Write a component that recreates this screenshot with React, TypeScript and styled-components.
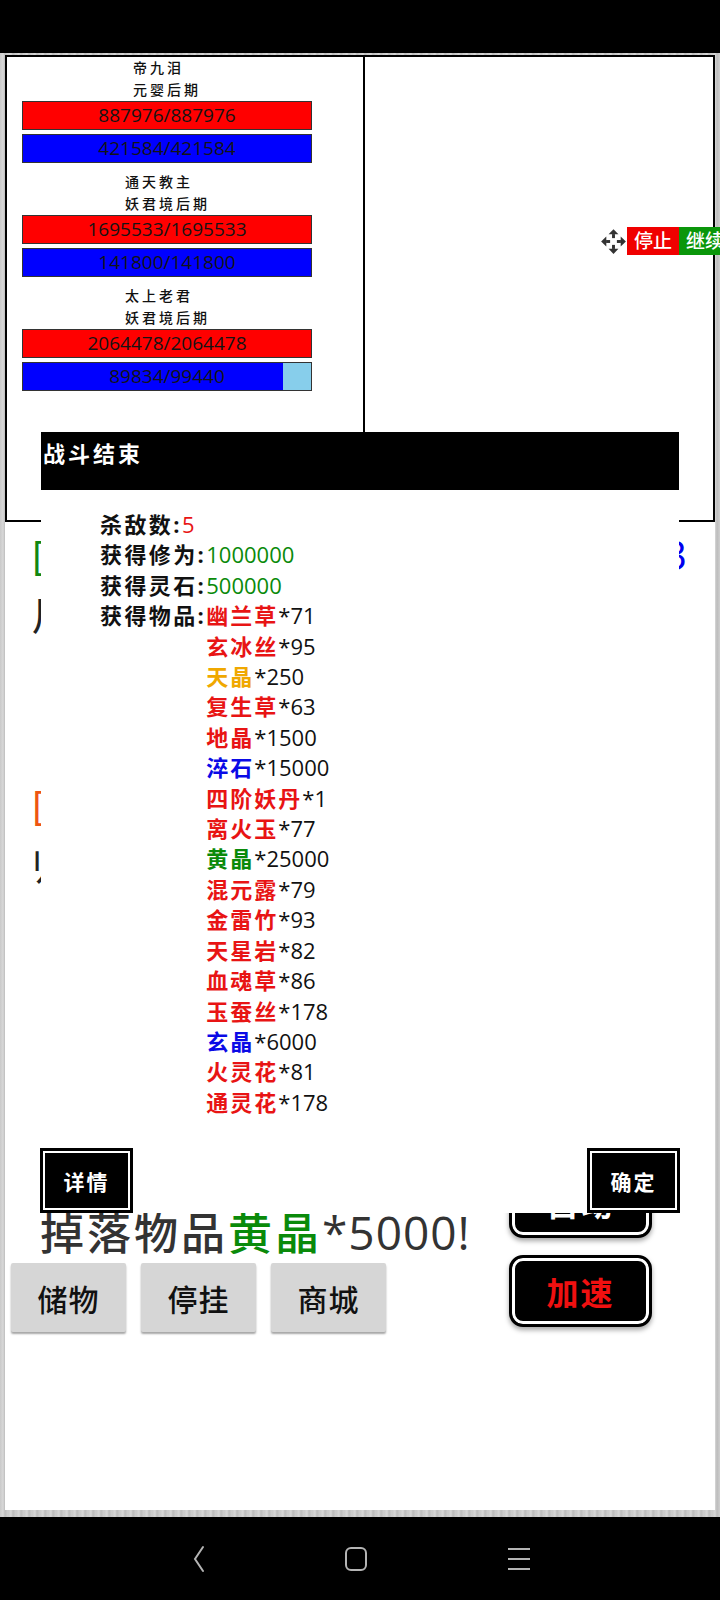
import React from 'react';
import styled, { createGlobalStyle } from 'styled-components';

const FONT = `"Open Sans", "Noto Sans CJK SC", sans-serif`;

const Global = createGlobalStyle`
    html, body {
        margin: 0;
        padding: 0;
        overflow: hidden;
        background: #000;
    }
    * {
        box-sizing: border-box;
    }
`;

const Root = styled.div`
    width: 720px;
    height: 1600px;
    display: flex;
    flex-direction: column;
    background: #000;
    font-family: ${FONT};
    color: #111;
`;

const StatusBar = styled.div`
    height: 53px;
    background: #000;
`;

const Stage = styled.div`
    flex: 1;
    padding: 2px 5px 7px 5px;
    background: repeating-linear-gradient(90deg, #c9c9c9 0px, #d8d8d8 3px, #bcbcbc 5px, #cfcfcf 8px);
`;

const Page = styled.div`
    position: relative;
    height: 100%;
    background: #fff;
    display: flex;
    flex-direction: column;
`;

/* battle frame */

const Frame = styled.div`
    display: grid;
    grid-template-columns: 358px 1fr;
    height: 467px;
    border: 2px solid #000;
`;

const LeftPane = styled.div`
    display: flex;
    flex-direction: column;
    gap: 8px;
    border-right: 2px solid #000;
`;

const Unit = styled.div`
    display: flex;
    flex-direction: column;
`;

const NameLine = styled.div<{ $indent: number }>`
    padding-left: ${p => p.$indent}px;
    font-size: 14px;
    line-height: 22px;
    letter-spacing: 3px;
    font-weight: 500;
    color: #111;
`;

const Bar = styled.div<{ $gap?: number }>`
    width: 290px;
    height: 29px;
    margin: ${p => p.$gap || 0}px 0 0 15px;
    border: 1px solid #333;
    font-size: 19px;
    line-height: 27px;
    text-align: center;
    color: #141414;
`;

const RightPane = styled.div`
    padding: 170px 0 0 235px;
`;

const Controls = styled.div`
    display: flex;
    align-items: center;
    white-space: nowrap;
`;

const ControlButton = styled.div<{ $bg: string }>`
    height: 28px;
    padding: 0 7px;
    background: ${p => p.$bg};
    color: #fff;
    font-size: 19px;
    line-height: 28px;
    font-weight: 500;
`;

/* log behind the dialog */

const Log = styled.div`
    padding: 0 28px 0 27px;
    font-size: 40px;
    line-height: 60px;
    white-space: nowrap;
`;

const Entry = styled.div<{ $top: number }>`
    margin-top: ${p => p.$top}px;
`;

const LogLine = styled.div`
    display: flex;
    justify-content: space-between;
    color: #222;
`;

const Tag = styled.span<{ $color: string }>`
    color: ${p => p.$color};
`;

/* footer */

const Footer = styled.div`
    margin-top: 271px;
    display: flex;
    justify-content: space-between;
    align-items: flex-end;
    padding-right: 63px;
`;

const FooterLeft = styled.div`
    display: flex;
    flex-direction: column;
`;

const Message = styled.div`
    padding-left: 35px;
    font-size: 44px;
    line-height: 60px;
    letter-spacing: 3px;
    font-weight: 500;
    color: #333;
    white-space: nowrap;
`;

const Digits = styled.span`
    font-size: 46px;
    letter-spacing: 1px;
    font-weight: 400;
`;

const GreyRow = styled.div`
    display: flex;
    gap: 15px;
    padding-left: 6px;
`;

const GreyButton = styled.div`
    width: 115px;
    height: 69px;
    display: flex;
    align-items: center;
    justify-content: center;
    background: #d6d6d6;
    border-radius: 2px;
    box-shadow: 0 2px 2px rgba(0, 0, 0, 0.35);
    font-size: 30px;
    letter-spacing: 1px;
    font-weight: 500;
    color: #111;
`;

const FooterRight = styled.div`
    display: flex;
    flex-direction: column;
    gap: 17px;
    padding-bottom: 5px;
`;

const BigButton = styled.div<{ $color: string }>`
    width: 143px;
    height: 72px;
    display: flex;
    align-items: center;
    justify-content: center;
    background: #000;
    border: 3px solid #000;
    border-radius: 14px;
    box-shadow: inset 0 0 0 3px #fff, 0 3px 5px rgba(0, 0, 0, 0.35);
    color: ${p => p.$color};
    font-size: 32px;
    letter-spacing: 2px;
    font-weight: 700;
`;

/* dialog */

const Dialog = styled.div`
    position: absolute;
    left: 36px;
    top: 377px;
    width: 638px;
    height: 781px;
    display: flex;
    flex-direction: column;
    background: #fff;
`;

const DialogHeader = styled.div`
    height: 58px;
    padding: 6px 2px 0;
    background: #000;
    color: #fff;
    font-size: 22px;
    line-height: 30px;
    letter-spacing: 3px;
    font-weight: 700;
`;

const DialogBody = styled.div`
    flex: 1;
    padding: 19px 0 0 59px;
    font-size: 22px;
    line-height: 30.4px;
    color: #111;
`;

const StatRow = styled.div`
    display: flex;
`;

const Label = styled.span`
    letter-spacing: 2.4px;
    font-weight: 700;
`;

const ItemList = styled.div`
    display: flex;
    flex-direction: column;
`;

const Colored = styled.span<{ $color: string; $cjk?: boolean }>`
    color: ${p => p.$color};
    letter-spacing: ${p => (p.$cjk ? '2px' : '0')};
    font-weight: ${p => (p.$cjk ? 700 : 400)};
`;

const DialogButtons = styled.div`
    display: flex;
    justify-content: space-between;
    margin: 0 -1px;
`;

const BoxButton = styled.div`
    width: 93px;
    height: 65px;
    display: flex;
    align-items: center;
    justify-content: center;
    background: #000;
    border: 3px solid #000;
    box-shadow: inset 0 0 0 2px #fff;
    color: #fff;
    font-size: 21px;
    letter-spacing: 2px;
    font-weight: 700;
`;

/* nav bar */

const NavBar = styled.div`
    height: 83px;
    background: #000;
    display: flex;
    align-items: center;
    justify-content: center;
    gap: 137px;
    padding-left: 4px;
`;

const RED = '#e81414';
const BLUE = '#0a0ae6';
const GREEN = '#0a8a0a';
const GOLD = '#f0a800';

const units = [
    { name: '帝九泪', realm: '元婴后期', indent: 126, hp: [887976, 887976], mp: [421584, 421584] },
    { name: '通天教主', realm: '妖君境后期', indent: 118, hp: [1695533, 1695533], mp: [141800, 141800] },
    { name: '太上老君', realm: '妖君境后期', indent: 118, hp: [2064478, 2064478], mp: [89834, 99440] },
];

const items: [string, string, number][] = [
    ['幽兰草', RED, 71],
    ['玄冰丝', RED, 95],
    ['天晶', GOLD, 250],
    ['复生草', RED, 63],
    ['地晶', RED, 1500],
    ['淬石', BLUE, 15000],
    ['四阶妖丹', RED, 1],
    ['离火玉', RED, 77],
    ['黄晶', GREEN, 25000],
    ['混元露', RED, 79],
    ['金雷竹', RED, 93],
    ['天星岩', RED, 82],
    ['血魂草', RED, 86],
    ['玉蚕丝', RED, 178],
    ['玄晶', BLUE, 6000],
    ['火灵花', RED, 81],
    ['通灵花', RED, 178],
];

const fillBg = (cur: number, max: number, color: string, empty: string) => {
    const pct = (cur / max) * 100;
    return `linear-gradient(to right, ${color} ${pct}%, ${empty} ${pct}%)`;
};

const MoveIcon = () => (
    <svg width="27" height="27" viewBox="0 0 24 24" fill="#333">
        <polygon points="12,1 7.6,5.6 16.4,5.6" />
        <rect x="10.7" y="5.4" width="2.6" height="3.6" />
        <polygon points="12,23 7.6,18.4 16.4,18.4" />
        <rect x="10.7" y="15" width="2.6" height="3.6" />
        <polygon points="1,12 5.6,7.6 5.6,16.4" />
        <rect x="5.4" y="10.7" width="3.6" height="2.6" />
        <polygon points="23,12 18.4,7.6 18.4,16.4" />
        <rect x="15" y="10.7" width="3.6" height="2.6" />
    </svg>
);

const BackIcon = () => (
    <svg width="14" height="28" viewBox="0 0 14 28" fill="none" stroke="#b4b4b4" strokeWidth="2" strokeLinecap="round">
        <polyline points="11,2 3,14 11,26" />
    </svg>
);

const HomeIcon = () => (
    <svg width="26" height="26" viewBox="0 0 26 26" fill="none" stroke="#b4b4b4" strokeWidth="2">
        <rect x="3" y="2" width="20" height="22" rx="5" />
    </svg>
);

const MenuIcon = () => (
    <svg width="26" height="26" viewBox="0 0 26 26" fill="none" stroke="#b4b4b4" strokeWidth="2">
        <line x1="2" y1="3" x2="24" y2="3" />
        <line x1="2" y1="13" x2="24" y2="13" />
        <line x1="2" y1="23" x2="24" y2="23" />
    </svg>
);

const App = () => (
    <Root>
        <Global />
        <StatusBar />
        <Stage>
            <Page>
                <Frame>
                    <LeftPane>
                        {units.map(u => (
                            <Unit key={u.name}>
                                <NameLine $indent={u.indent}>{u.name}</NameLine>
                                <NameLine $indent={u.indent}>{u.realm}</NameLine>
                                <Bar style={{ background: fillBg(u.hp[0], u.hp[1], '#ff0000', '#87ceeb') }}>
                                    {u.hp[0]}/{u.hp[1]}
                                </Bar>
                                <Bar $gap={4} style={{ background: fillBg(u.mp[0], u.mp[1], '#0000ff', '#87ceeb') }}>
                                    {u.mp[0]}/{u.mp[1]}
                                </Bar>
                            </Unit>
                        ))}
                    </LeftPane>
                    <RightPane>
                        <Controls>
                            <MoveIcon />
                            <ControlButton $bg="#f00000">停止</ControlButton>
                            <ControlButton $bg="#0a960a">继续</ControlButton>
                        </Controls>
                    </RightPane>
                </Frame>

                <Log>
                    <Entry $top={3}>
                        <LogLine>
                            <span>
                                <Tag $color="#118811">[战斗]</Tag>击败通天教主
                            </span>
                            <Tag $color="#0000ee">1695533</Tag>
                        </LogLine>
                        <LogLine>川中修士获得灵石</LogLine>
                    </Entry>
                    <Entry $top={130}>
                        <LogLine>
                            <span>
                                <Tag $color="#ee5511">[宝物]</Tag>太上老君
                            </span>
                        </LogLine>
                        <LogLine>归元露已收入储物</LogLine>
                    </Entry>
                </Log>

                <Footer>
                    <FooterLeft>
                        <Message>
                            掉落物品<Tag $color="#0a8a0a">黄晶</Tag>
                            <Digits>*5000!</Digits>
                        </Message>
                        <GreyRow>
                            <GreyButton>储物</GreyButton>
                            <GreyButton>停挂</GreyButton>
                            <GreyButton>商城</GreyButton>
                        </GreyRow>
                    </FooterLeft>
                    <FooterRight>
                        <BigButton $color="#fff">自动</BigButton>
                        <BigButton $color="#f01010">加速</BigButton>
                    </FooterRight>
                </Footer>

                <Dialog>
                    <DialogHeader>战斗结束</DialogHeader>
                    <DialogBody>
                        <StatRow>
                            <Label>杀敌数:</Label>
                            <Colored $color={RED}>5</Colored>
                        </StatRow>
                        <StatRow>
                            <Label>获得修为:</Label>
                            <Colored $color={GREEN}>1000000</Colored>
                        </StatRow>
                        <StatRow>
                            <Label>获得灵石:</Label>
                            <Colored $color={GREEN}>500000</Colored>
                        </StatRow>
                        <StatRow>
                            <Label>获得物品:</Label>
                            <ItemList>
                                {items.map(([name, color, n]) => (
                                    <span key={name}>
                                        <Colored $color={color} $cjk>
                                            {name}
                                        </Colored>
                                        *{n}
                                    </span>
                                ))}
                            </ItemList>
                        </StatRow>
                    </DialogBody>
                    <DialogButtons>
                        <BoxButton>详情</BoxButton>
                        <BoxButton>确定</BoxButton>
                    </DialogButtons>
                </Dialog>
            </Page>
        </Stage>
        <NavBar>
            <BackIcon />
            <HomeIcon />
            <MenuIcon />
        </NavBar>
    </Root>
);

export default App;
